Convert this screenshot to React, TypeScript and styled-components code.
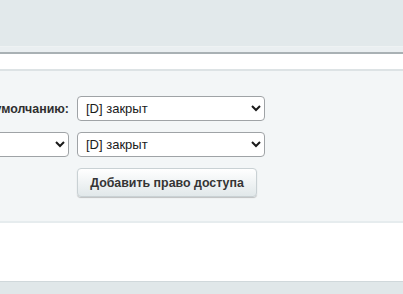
import React from "react";
import styled, { createGlobalStyle } from "styled-components";

const GlobalStyle = createGlobalStyle`
  html, body {
    margin: 0;
    padding: 0;
    overflow: hidden;
  }
  body {
    width: 403px;
    height: 294px;
    background: #ffffff;
    font-family: "Liberation Sans", Arial, sans-serif;
  }
`;

const Page = styled.div`
  width: 403px;
  height: 294px;
  display: flex;
  flex-direction: column;
  overflow: hidden;
`;

const TopBar = styled.div`
  height: 46px;
  background: #e2e9eb;
  border-bottom: 1px solid #eef2f3;
`;

const TabStrip = styled.div`
  height: 5px;
  background: #eaeff1;
  border-bottom: 2px solid #a9b1b4;
`;

const WhiteStrip = styled.div`
  height: 15px;
  background: #ffffff;
  border-bottom: 2px solid #dde3e5;
`;

const Panel = styled.div`
  background: #f3f6f7;
  padding: 25px 0;
  border-bottom: 2px solid #e6ecee;
  height: 100px;
`;

const Grid = styled.div`
  display: grid;
  grid-template-columns: 69px 188px;
  column-gap: 8px;
  row-gap: 11px;
  align-items: center;
`;

const Cell = styled.div<{ $right?: boolean }>`
  display: flex;
  justify-content: ${(p) => (p.$right ? "flex-end" : "flex-start")};
  align-items: center;
  white-space: nowrap;
`;

const Label = styled.span`
  font-size: 12.4px;
  font-weight: bold;
  color: #2f2f2f;
`;

const Select = styled.select<{ $w: number }>`
  flex: none;
  width: ${(p) => p.$w}px;
  height: 25px;
  border: 1px solid #9fa3a6;
  border-radius: 4px;
  background: #ffffff;
  font-family: "Liberation Sans", Arial, sans-serif;
  font-size: 13px;
  color: #1a1a1a;
  padding: 0 4px;
  appearance: auto;
`;

const Button = styled.button`
  height: 29px;
  width: 180px;
  border: 1px solid #c9d1d4;
  border-radius: 4px;
  background: linear-gradient(#ffffff, #e1e8ea);
  box-shadow: 0 1px 1px rgba(0, 0, 0, 0.22);
  font-family: "Liberation Sans", Arial, sans-serif;
  font-size: 12.4px;
  font-weight: bold;
  color: #353535;
  padding: 0;
`;

const Spacer = styled.div`
  flex: 1;
  background: #ffffff;
`;

const BottomBar = styled.div`
  height: 12px;
  background: #e0e7e9;
  border-top: 1px solid #d0d8db;
`;

export default function App() {
  return (
    <>
      <GlobalStyle />
      <Page>
        <TopBar />
        <TabStrip />
        <WhiteStrip />
        <Panel>
          <Grid>
            <Cell $right>
              <Label>По умолчанию:</Label>
            </Cell>
            <Cell>
              <Select $w={188} defaultValue="D">
                <option value="D">[D] закрыт</option>
                <option value="R">[R] чтение</option>
                <option value="W">[W] запись</option>
              </Select>
            </Cell>
            <Cell $right>
              <Select $w={200} defaultValue="">
                <option value=""></option>
              </Select>
            </Cell>
            <Cell>
              <Select $w={188} defaultValue="D">
                <option value="D">[D] закрыт</option>
                <option value="R">[R] чтение</option>
                <option value="W">[W] запись</option>
              </Select>
            </Cell>
            <div />
            <Cell>
              <Button>Добавить право доступа</Button>
            </Cell>
          </Grid>
        </Panel>
        <Spacer />
        <BottomBar />
      </Page>
    </>
  );
}
